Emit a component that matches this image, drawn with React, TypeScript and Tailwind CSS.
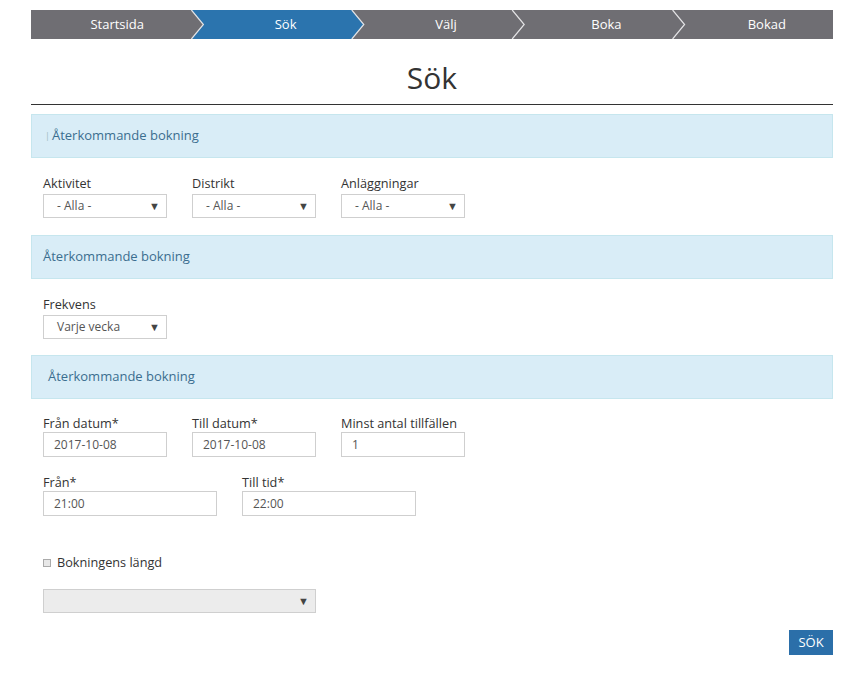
import React from 'react';

const steps = ['Startsida', 'Sök', 'Välj', 'Boka', 'Bokad'];
const ACTIVE = 1;

const Breadcrumb: React.FC = () => {
  const seg = 802 / steps.length;
  return (
    <div className="relative grid h-[29px] grid-cols-5 bg-[#6f6e73] text-[13px] text-white">
      <svg className="absolute inset-0 h-full w-full" viewBox="0 0 802 29" preserveAspectRatio="none">
        <polygon
          points={`${seg * ACTIVE},0 ${seg * (ACTIVE + 1)},0 ${seg * (ACTIVE + 1) + 12},14.5 ${seg * (ACTIVE + 1)},29 ${seg * ACTIVE},29 ${seg * ACTIVE + 12},14.5`}
          fill="#2b74ae"
        />
        {[1, 2, 3, 4].map((i) => (
          <polyline
            key={i}
            points={`${seg * i},0 ${seg * i + 12},14.5 ${seg * i},29`}
            fill="none"
            stroke="#e4e4e6"
            strokeWidth="1.2"
          />
        ))}
      </svg>
      {steps.map((s, i) => (
        <div
          key={s}
          className={`relative flex items-center justify-center ${i === 0 ? 'pl-3' : 'pl-7'}`}
        >
          {s}
        </div>
      ))}
    </div>
  );
};

const Panel: React.FC<{ children: React.ReactNode; className?: string }> = ({ children, className }) => (
  <div className={`flex h-[44px] items-center border border-[#c6e6ee] bg-[#d9edf7] text-[13px] text-[#3b6e8f] ${className ?? ''}`}>
    {children}
  </div>
);

const Select: React.FC<{ value: string; className?: string; disabled?: boolean }> = ({ value, className, disabled }) => (
  <div
    className={`flex h-[24px] items-center justify-between border border-[#cfcfcf] pl-[13px] pr-[6px] text-[12px] text-[#555] ${disabled ? 'bg-[#ececec]' : 'bg-white'} ${className ?? ''}`}
  >
    <span>{value}</span>
    <span className="text-[11px] text-[#444]">▼</span>
  </div>
);

const Input: React.FC<{ value: string; className?: string }> = ({ value, className }) => (
  <div className={`flex h-[25px] items-center border border-[#cfcfcf] bg-white pl-[10px] text-[12px] text-[#555] ${className ?? ''}`}>
    {value}
  </div>
);

const Field: React.FC<{ label: string; children: React.ReactNode }> = ({ label, children }) => (
  <div className="flex flex-col">
    <label className="text-[12.7px] leading-[17px] text-[#333]">{label}</label>
    {children}
  </div>
);

export default function App() {
  return (
    <div
      className="min-h-[677px] w-[867px] bg-white px-[31px] pt-[10px]"
      style={{ fontFamily: '"Open Sans", "Noto Sans", sans-serif' }}
    >
      <div className="w-[802px]">
        <Breadcrumb />

        <h1 className="mt-[17px] text-center text-[30px] leading-[44px] text-[#333]">Sök</h1>
        <div className="mt-[4px] h-px bg-[#333]" />

        <Panel className="mt-[9px] pl-[13px]">
          <span className="mr-[2px] text-[9px] text-[#9bb]">|</span>Återkommande bokning
        </Panel>

        <div className="mt-[17px] flex gap-[25px] pl-[12px]">
          <Field label="Aktivitet">
            <Select value="- Alla -" className="mt-[2px] w-[124px]" />
          </Field>
          <Field label="Distrikt">
            <Select value="- Alla -" className="mt-[2px] w-[124px]" />
          </Field>
          <Field label="Anläggningar">
            <Select value="- Alla -" className="mt-[2px] w-[124px]" />
          </Field>
        </div>

        <Panel className="mt-[17px] pl-[11px]">Återkommande bokning</Panel>

        <div className="mt-[17px] pl-[12px]">
          <Field label="Frekvens">
            <Select value="Varje vecka" className="mt-[2px] w-[124px]" />
          </Field>
        </div>

        <Panel className="mt-[16px] pl-[16px]">Återkommande bokning</Panel>

        <div className="mt-[16px] flex gap-[25px] pl-[12px]">
          <Field label="Från datum*">
            <Input value="2017-10-08" className="w-[124px]" />
          </Field>
          <Field label="Till datum*">
            <Input value="2017-10-08" className="w-[124px]" />
          </Field>
          <Field label="Minst antal tillfällen">
            <Input value="1" className="w-[124px]" />
          </Field>
        </div>

        <div className="mt-[17px] flex gap-[25px] pl-[12px]">
          <Field label="Från*">
            <Input value="21:00" className="w-[174px]" />
          </Field>
          <Field label="Till tid*">
            <Input value="22:00" className="w-[174px]" />
          </Field>
        </div>

        <div className="mt-[37px] flex items-center gap-[6px] pl-[12px] text-[12.7px] text-[#333]">
          <span className="inline-block h-[8px] w-[8px] border border-[#aaa] bg-[#e8e8e8]" />
          <span>Bokningens längd</span>
        </div>

        <div className="mt-[17px] pl-[12px]">
          <Select value="" disabled className="w-[273px]" />
        </div>

        <div className="mt-[17px] flex justify-end">
          <button className="h-[25px] w-[44px] bg-[#2b6fa9] text-[13px] text-white">SÖK</button>
        </div>
      </div>
    </div>
  );
}
